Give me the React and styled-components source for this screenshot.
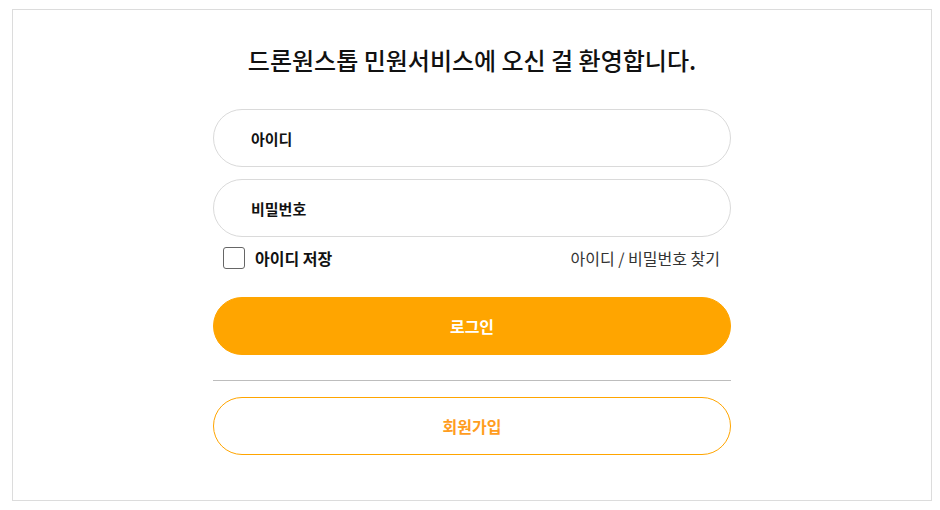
import styled, { createGlobalStyle } from "styled-components";

const GlobalStyle = createGlobalStyle`
  body {
    margin: 0;
    background: #ffffff;
    font-family: "Noto Sans CJK KR", "Noto Sans", sans-serif;
    color: #111;
  }
`;

const Page = styled.div`
  padding: 9px 8px 9px 12px;
`;

const Box = styled.div`
  box-sizing: border-box;
  width: 920px;
  height: 492px;
  border: 1px solid #dcdcdc;
  display: flex;
  flex-direction: column;
  align-items: center;
  padding-top: 33px;
`;

const Title = styled.h2`
  margin: 0 0 32px;
  font-size: 24px;
  font-weight: 500;
  line-height: 34px;
  color: #111;
`;

const Form = styled.form`
  width: 518px;
  display: flex;
  flex-direction: column;
`;

const Input = styled.input`
  box-sizing: border-box;
  width: 100%;
  height: 58px;
  border: 1px solid #dadada;
  border-radius: 29px;
  padding: 0 0 0 37px;
  margin-bottom: 12px;
  font-family: inherit;
  font-size: 15px;
  font-weight: 700;
  outline: none;
  &::placeholder {
    color: #111;
    opacity: 1;
  }
`;

const OptionRow = styled.div`
  display: flex;
  justify-content: space-between;
  align-items: center;
  padding: 0 11px 0 10px;
  height: 22px;
  margin: -2px 0 28px;
`;

const CheckLabel = styled.label`
  display: flex;
  align-items: center;
  gap: 10px;
  font-size: 16px;
  font-weight: 700;
  color: #111;
`;

const CheckBox = styled.span`
  width: 20px;
  height: 20px;
  border: 1px solid #666;
  border-radius: 3px;
  display: inline-block;
`;

const FindLink = styled.a`
  font-size: 16px;
  color: #333;
  text-decoration: none;
`;

const Button = styled.button`
  box-sizing: border-box;
  width: 100%;
  height: 58px;
  border-radius: 29px;
  font-family: inherit;
  font-size: 16px;
  font-weight: 700;
  cursor: pointer;
  border: 1px solid #ffa500;
  background: ${(p) => (p.$outline ? "#ffffff" : "#ffa500")};
  color: ${(p) => (p.$outline ? "#ff9d1e" : "#ffffff")};
`;

const Divider = styled.hr`
  width: 100%;
  margin: 25px 0 16px;
  border: 0;
  border-top: 1px solid #bdbdbd;
`;

export default function App() {
  return (
    <Page>
      <GlobalStyle />
      <Box>
        <Title>드론원스톱 민원서비스에 오신 걸 환영합니다.</Title>
        <Form onSubmit={(e) => e.preventDefault()}>
          <Input type="text" placeholder="아이디" />
          <Input type="password" placeholder="비밀번호" />
          <OptionRow>
            <CheckLabel>
              <CheckBox />
              아이디 저장
            </CheckLabel>
            <FindLink href="#">아이디 / 비밀번호 찾기</FindLink>
          </OptionRow>
          <Button type="submit">로그인</Button>
          <Divider />
          <Button type="button" $outline>
            회원가입
          </Button>
        </Form>
      </Box>
    </Page>
  );
}
